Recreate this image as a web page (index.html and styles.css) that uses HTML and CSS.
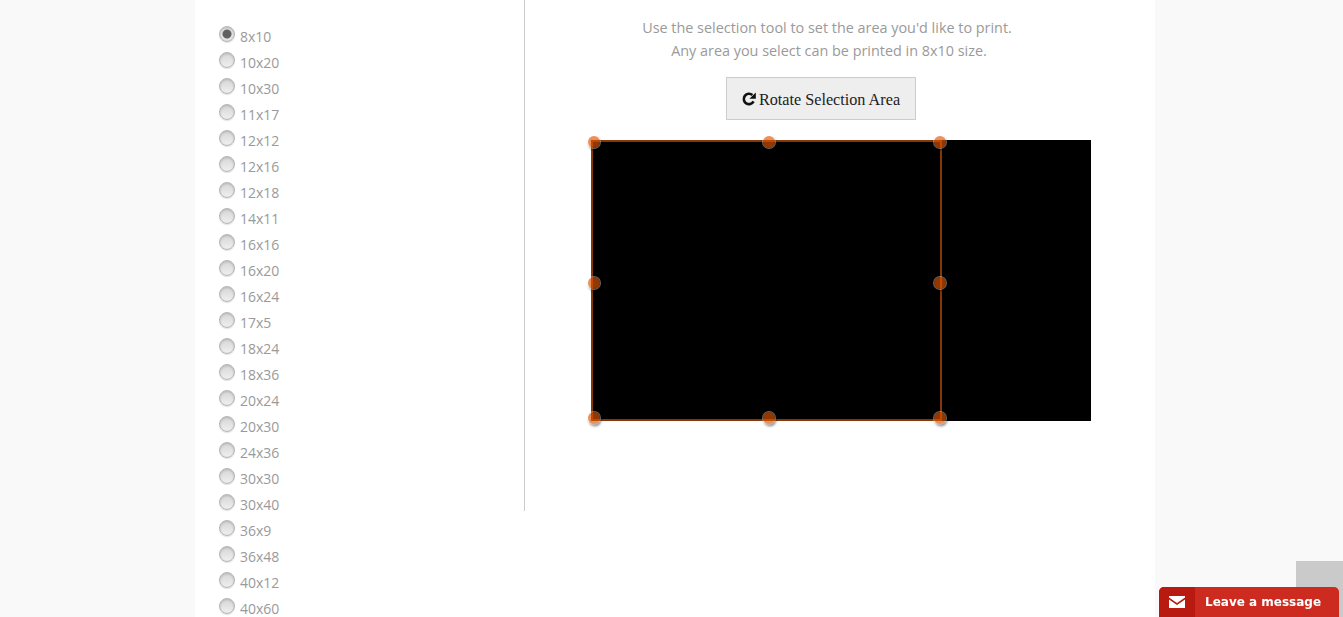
FILE: index.html
```html
<!DOCTYPE html>
<html lang="en">
<head>
    <meta charset="UTF-8">
    <meta name="viewport" content="width=device-width, initial-scale=1.0">
    <title>Select Print Size</title>
    <link rel="stylesheet" href="styles.css">
</head>
<body>
    <div class="page">
        <form class="size-list">
            <label class="size-option"><span class="radio radio-checked"></span><span class="size-name">8x10</span></label>
            <label class="size-option"><span class="radio"></span><span class="size-name">10x20</span></label>
            <label class="size-option"><span class="radio"></span><span class="size-name">10x30</span></label>
            <label class="size-option"><span class="radio"></span><span class="size-name">11x17</span></label>
            <label class="size-option"><span class="radio"></span><span class="size-name">12x12</span></label>
            <label class="size-option"><span class="radio"></span><span class="size-name">12x16</span></label>
            <label class="size-option"><span class="radio"></span><span class="size-name">12x18</span></label>
            <label class="size-option"><span class="radio"></span><span class="size-name">14x11</span></label>
            <label class="size-option"><span class="radio"></span><span class="size-name">16x16</span></label>
            <label class="size-option"><span class="radio"></span><span class="size-name">16x20</span></label>
            <label class="size-option"><span class="radio"></span><span class="size-name">16x24</span></label>
            <label class="size-option"><span class="radio"></span><span class="size-name">17x5</span></label>
            <label class="size-option"><span class="radio"></span><span class="size-name">18x24</span></label>
            <label class="size-option"><span class="radio"></span><span class="size-name">18x36</span></label>
            <label class="size-option"><span class="radio"></span><span class="size-name">20x24</span></label>
            <label class="size-option"><span class="radio"></span><span class="size-name">20x30</span></label>
            <label class="size-option"><span class="radio"></span><span class="size-name">24x36</span></label>
            <label class="size-option"><span class="radio"></span><span class="size-name">30x30</span></label>
            <label class="size-option"><span class="radio"></span><span class="size-name">30x40</span></label>
            <label class="size-option"><span class="radio"></span><span class="size-name">36x9</span></label>
            <label class="size-option"><span class="radio"></span><span class="size-name">36x48</span></label>
            <label class="size-option"><span class="radio"></span><span class="size-name">40x12</span></label>
            <label class="size-option"><span class="radio"></span><span class="size-name">40x60</span></label>
        </form>

        <div class="crop-panel">
            <p class="crop-help">Use the selection tool to set the area you'd like to print.<span class="crop-help-line">Any area you select can be printed in 8x10 size.</span></p>
            <button type="button" class="rotate-btn">
                <svg class="rotate-icon" viewBox="0 0 14 14" width="14" height="14">
                    <path d="M11.6 9.4A5.2 5.2 0 1 1 10.4 3" fill="none" stroke="#111" stroke-width="2.6"/>
                    <path d="M13.8 0.4V6.8H7.4Z" fill="#111"/>
                </svg>
                Rotate Selection Area
            </button>
            <div class="crop-image">
                <div class="selection">
                    <span class="handle handle-tl"></span>
                    <span class="handle handle-tc"></span>
                    <span class="handle handle-tr"></span>
                    <span class="handle handle-ml"></span>
                    <span class="handle handle-mr"></span>
                    <span class="handle handle-bl"></span>
                    <span class="handle handle-bc"></span>
                    <span class="handle handle-br"></span>
                </div>
            </div>
        </div>
    </div>

    <div class="scroll-top"></div>

    <div class="chat-tab">
        <span class="chat-icon">
            <svg viewBox="0 0 16 12" width="16" height="12">
                <path d="M0 0H16V1.6L8 7 0 1.6Z" fill="#fff"/>
                <path d="M0 3.6L8 9 16 3.6V12H0Z" fill="#fff"/>
            </svg>
        </span>
        <span class="chat-label">Leave a message</span>
    </div>
</body>
</html>
```

FILE: styles.css
```css
html, body {
    height: 100%;
    overflow: hidden;
}

body {
    margin: 0;
    background: #f9f9f9;
    font-family: "Open Sans", sans-serif;
    color: #999;
}

.page {
    width: 960px;
    height: 100%;
    margin-left: 195px;
    background: #fff;
    display: flex;
    align-items: flex-start;
}

/* left column */
.size-list {
    box-sizing: border-box;
    width: 330px;
    height: 511px;
    padding: 24px 0 0 24px;
    border-right: 1px solid #ccc;
    flex-shrink: 0;
}

.size-option {
    display: flex;
    height: 26px;
    font-size: 14px;
    color: #9a9a9a;
}

.radio {
    box-sizing: border-box;
    width: 16px;
    height: 16px;
    margin-top: 2px;
    border: 1px solid #b5b5b5;
    border-radius: 50%;
    background: linear-gradient(#d6d6d6, #efefef);
    box-shadow: inset 0 1px 2px #b5b5b5, 0 1px 1px #e2e2e2;
}

.radio-checked {
    background: radial-gradient(circle, #606060 0, #606060 4px, #e4e4e4 5px);
}

.size-name {
    margin-left: 5px;
    line-height: 26px;
}

/* right column */
.crop-panel {
    flex: 1;
    padding-top: 16px;
    padding-left: 66px;
}

.crop-help {
    width: 472px;
    margin: 0;
    font-size: 14.4px;
    line-height: 23px;
    text-align: center;
    color: #9a9a9a;
}

.crop-help-line {
    display: block;
    padding-left: 4px;
}

.rotate-btn {
    display: flex;
    align-items: center;
    justify-content: center;
    gap: 3px;
    box-sizing: border-box;
    width: 190px;
    height: 43px;
    margin: 15px 0 20px 135px;
    padding: 3px 0 0;
    background: #eee;
    border: 1px solid #ccc;
    font-family: "Liberation Serif", serif;
    font-size: 16.2px;
    color: #222;
}

.rotate-icon {
    flex-shrink: 0;
    margin-top: -3px;
}

.crop-image {
    width: 500px;
    height: 281px;
    background: #000;
}

.selection {
    box-sizing: border-box;
    position: relative;
    width: 351px;
    height: 281px;
    border: 2px solid #853708;
}

/* see-through, so they read light on the page and dark on the picture */
.handle {
    position: absolute;
    width: 12px;
    height: 12px;
    border-radius: 50%;
    background: rgba(225, 85, 0, 0.65);
    box-shadow: 0 0 0 1px rgba(255, 255, 255, 0.4), 1px 2px 3px rgba(0, 0, 0, 0.55);
}

.handle-tl { left: -5px; top: -6px; }
.handle-tc { left: 170px; top: -6px; }
.handle-tr { right: -6px; top: -6px; }
.handle-ml { left: -5px; top: 135px; }
.handle-mr { right: -6px; top: 135px; }
.handle-bl { left: -5px; bottom: -5px; }
.handle-bc { left: 170px; bottom: -5px; }
.handle-br { right: -6px; bottom: -5px; }

/* fixed in the corner */
.scroll-top {
    position: fixed;
    right: 0;
    bottom: 0;
    width: 47px;
    height: 56px;
    background: #cacaca;
}

.chat-tab {
    position: fixed;
    right: 4px;
    bottom: 0;
    width: 180px;
    height: 30px;
    display: flex;
    background: #cd2b1f;
    border-radius: 5px 5px 0 0;
    overflow: hidden;
}

.chat-icon {
    display: flex;
    align-items: center;
    justify-content: center;
    width: 36px;
    background: #b81a12;
}

.chat-label {
    margin-left: 10px;
    font-family: "DejaVu Sans", sans-serif;
    font-size: 12px;
    font-weight: 700;
    line-height: 31px;
    color: #fff;
}
```
